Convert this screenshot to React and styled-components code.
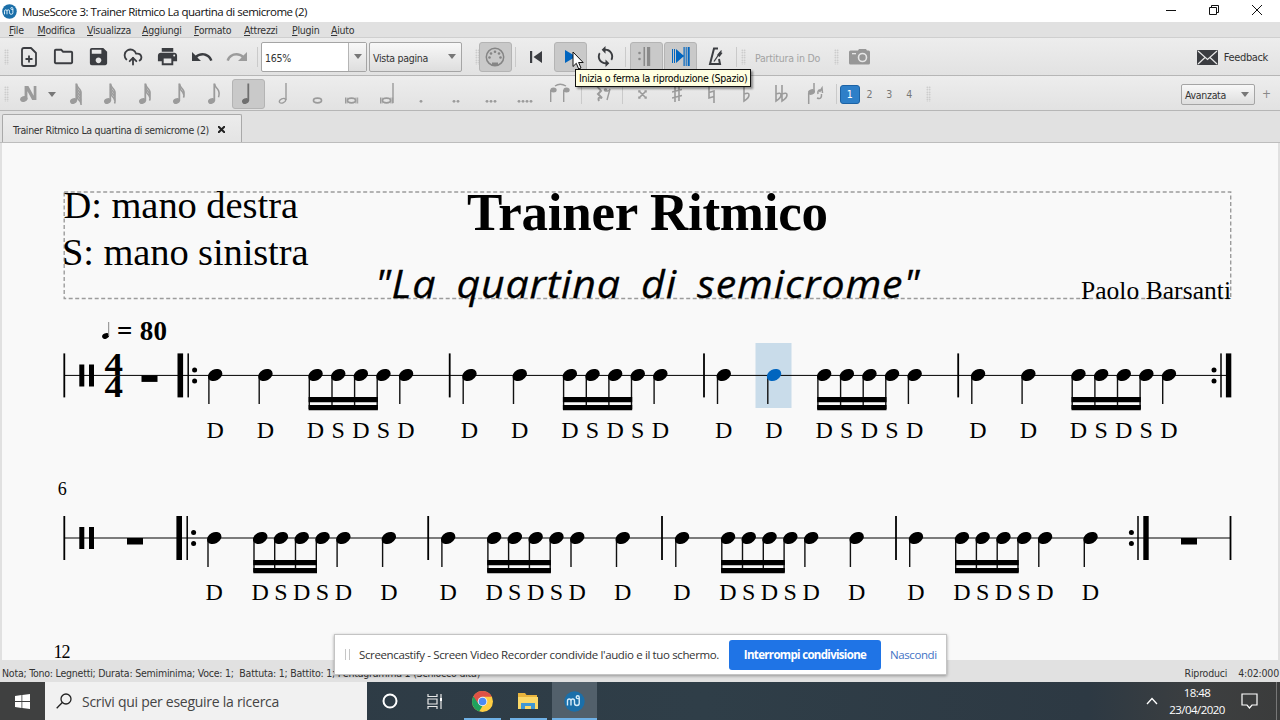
import React from 'react';
import styled, { createGlobalStyle } from 'styled-components';
import { MdSave, MdPrint, MdUndo, MdRedo, MdLoop, MdOutlineFolder } from 'react-icons/md';
import { CloudUpload } from 'lucide-react';

// --- Palette ---
const colors = {
  chrome: '#e1e1e1',
  toolbarTop: '#ededed',
  toolbarBottom: '#e2e2e2',
  line: '#b6b6b6',
  icon: '#3b3d41',
  disabled: '#9b9b9b',
  accent: '#0065bf',
  page: '#f9f9f9',
  text: '#333333',
};

const uiFont = '"DejaVu Sans Condensed", "DejaVu Sans", sans-serif';
const winFont = '"Open Sans", "Noto Sans", sans-serif';
const serif = '"Liberation Serif", serif';

const GlobalStyle = createGlobalStyle`
  * { box-sizing: border-box; }
  body { margin: 0; overflow: hidden; background: ${colors.chrome}; }
  svg { display: block; flex: none; }
`;

// --- Layout ---
const Screen = styled.div`
  position: relative;
  width: 1280px;
  height: 720px;
  display: flex;
  flex-direction: column;
  background: ${colors.chrome};
  font-family: ${uiFont};
  color: ${colors.text};
  white-space: nowrap;
`;

const TitleBar = styled.header`
  height: 22px;
  display: flex;
  align-items: center;
  padding-left: 2px;
  background: #fff;
  font: 11.5px ${winFont};
  letter-spacing: -0.48px;
  color: #111;
`;

const TitleText = styled.span`
  margin-left: 5px;
  flex: 1;
`;

const WindowButtons = styled.div`
  display: flex;
  align-items: center;
  gap: 33px;
  padding: 0 18px 3px 0;
`;

const MenuBar = styled.nav`
  height: 16px;
  display: flex;
  align-items: center;
  padding: 1px 0 0 9px;
  font-size: 10.5px;
  letter-spacing: -0.25px;
  border-bottom: 1px solid #cfcfcf;
`;

const MenuItem = styled.span`
  width: ${({ $w }) => $w}px;

  &::first-letter {
    text-decoration: underline;
  }
`;

const Toolbar = styled.div`
  height: ${({ $h }) => $h}px;
  display: flex;
  align-items: center;
  padding: ${({ $pt }) => $pt || 0}px 0 0 4px;
  background: linear-gradient(${colors.toolbarTop}, ${colors.toolbarBottom});
  border-bottom: 1px solid ${colors.line};
  font-size: 10.5px;
  letter-spacing: -0.2px;
`;

const Handle = styled.div`
  width: 5px;
  height: 16px;
  margin: 0 ${({ $gap }) => $gap || 0}px 0 ${({ $before }) => $before || 0}px;
  background-image: radial-gradient(circle, #bdbdbd 0.7px, transparent 0.9px);
  background-size: 2.5px 2.5px;
`;

const Separator = styled.div`
  width: 1px;
  height: 20px;
  margin: 0 ${({ $m }) => $m || '3px'};
  background: #cacaca;
`;

const Group = styled.div`
  display: flex;
  align-items: center;
  gap: 1.6px;
`;

const ToolButton = styled.button`
  width: ${({ $w }) => $w || 33}px;
  height: 30px;
  padding: 0;
  display: flex;
  align-items: center;
  justify-content: center;
  border: 1px solid ${({ $on }) => ($on ? '#b4b4b4' : 'transparent')};
  border-radius: 3px;
  background: ${({ $on }) => ($on ? '#c9c9c9' : 'transparent')};
  color: ${({ $off }) => ($off ? colors.disabled : colors.icon)};
`;

const Combo = styled.div`
  width: ${({ $w }) => $w}px;
  height: ${({ $h }) => $h || 30}px;
  display: flex;
  align-items: center;
  justify-content: space-between;
  margin-right: ${({ $mr }) => $mr || 0}px;
  padding-left: 3px;
  border: 1px solid #a5a5a5;
  border-radius: 2px;
  background: ${({ $edit }) => ($edit ? '#fff' : 'linear-gradient(#f8f8f8, #dedede)')};
`;

const Arrow = styled.span`
  width: 18px;
  height: 100%;
  display: flex;
  align-items: center;
  justify-content: center;
  border-left: ${({ $split }) => ($split ? '1px solid #b5b5b5' : 'none')};
  background: ${({ $split }) => ($split ? 'linear-gradient(#f8f8f8, #dedede)' : 'none')};

  &::after {
    content: '';
    border: 4px solid transparent;
    border-top: 5px solid #777;
    border-bottom: 0;
  }
`;

const ComboText = styled.span`
  padding-top: 2px;
  letter-spacing: ${({ $ls }) => $ls || '-0.3px'};
`;

const MutedLabel = styled.span`
  width: 79px;
  padding-top: 2px;
  color: #a3a3a3;
`;

const Feedback = styled.div`
  display: flex;
  align-items: center;
  gap: 6px;
  margin-left: auto;
  padding: 1px 12px 0 0;
  font-size: 11px;
  letter-spacing: -0.35px;
`;

const Voice = styled.span`
  width: 19.8px;
  height: 19px;
  display: flex;
  align-items: center;
  justify-content: center;
  border-radius: 3px;
  border: 1px solid ${({ $on }) => ($on ? '#1c62a4' : 'transparent')};
  background: ${({ $on }) => ($on ? '#2e7fc8' : 'transparent')};
  color: ${({ $on }) => ($on ? '#fff' : '#777')};
`;

const Plus = styled.span`
  width: 23px;
  text-align: center;
  font-size: 12px;
  color: #888;
`;

const TabBar = styled.div`
  height: 32px;
  display: flex;
  align-items: flex-end;
  padding-left: 2px;
  border-bottom: 1px solid #bdbdbd;
`;

const Tab = styled.div`
  width: 240px;
  height: 28px;
  display: flex;
  align-items: center;
  gap: 9px;
  padding: 2px 0 0 10px;
  border: 1px solid #a9a9a9;
  border-bottom: 0;
  border-radius: 2px 2px 0 0;
  background: linear-gradient(#ececec, #e4e4e4);
  font-size: 10.5px;
  letter-spacing: -0.34px;
`;

const ScoreView = styled.main`
  height: 517px;
  padding: 0 2px;

  & > svg {
    background: ${colors.page};
  }
`;

const StatusBar = styled.footer`
  height: 22px;
  display: flex;
  align-items: center;
  gap: 11px;
  padding: 3px 1px 0 2px;
  font-size: 10.5px;
  letter-spacing: -0.2px;
`;

const StatusText = styled.span`
  flex: 1;
  white-space: pre;
  letter-spacing: -0.22px;
`;

const Taskbar = styled.div`
  height: 38px;
  display: flex;
  background: linear-gradient(90deg, #2d3943 0, #2f3e48 55%, #2d3943 85%, #3d3f40 94%, #3b3c3c 100%);
  font-family: ${winFont};
  color: #fff;
`;

const StartButton = styled.div`
  width: 45px;
  display: flex;
  align-items: center;
  justify-content: center;
  background: #3f4040;
`;

const Search = styled.div`
  width: 322px;
  display: flex;
  align-items: center;
  gap: 10px;
  padding-left: 11px;
  background: #f1f1f1;
  color: #444;
  font-size: 14px;
  letter-spacing: -0.27px;
`;

const TaskItem = styled.div`
  width: ${({ $w }) => $w || 45}px;
  display: flex;
  align-items: center;
  justify-content: center;
  background: ${({ $active }) => ($active ? '#52606b' : 'transparent')};
  box-shadow: ${({ $open }) => ($open ? 'inset 0 -2px #6fb1e6' : 'none')};
  margin: 0 ${({ $mx }) => $mx || 0}px;
`;

const Tray = styled.div`
  margin-left: auto;
  display: flex;
  align-items: center;
  padding-right: 3px;
`;

const Clock = styled.div`
  width: 72px;
  margin-left: 3px;
  text-align: center;
  font-size: 11.5px;
  line-height: 17px;
  letter-spacing: -0.55px;
`;

const ActionCenter = styled.svg`
  margin-left: 8px;
`;

const TrayEnd = styled.div`
  width: 1px;
  height: 38px;
  margin-left: 18px;
  background: #777;
`;

// --- Things floating over the window ---
const Tooltip = styled.div`
  position: absolute;
  left: 575px;
  top: 69px;
  width: 176px;
  height: 18px;
  padding-left: 3px;
  line-height: 16px;
  border: 1px solid #111;
  background: #ffffe1;
  box-shadow: 2px 2px 2px rgba(0, 0, 0, 0.4);
  font-size: 10.5px;
  letter-spacing: -0.28px;
  color: #000;
`;

const Pointer = styled.svg`
  position: absolute;
  left: 572px;
  top: 51px;
`;

const ShareBanner = styled.div`
  position: absolute;
  left: 334px;
  top: 634px;
  width: 613px;
  height: 41px;
  display: flex;
  align-items: center;
  padding-left: 10px;
  border: 1px solid #c4c4c4;
  background: #fff;
  box-shadow: 0 1px 3px rgba(0, 0, 0, 0.35);
  font: 11.5px ${winFont};
`;

const Grip = styled.span`
  width: 5px;
  height: 11px;
  margin-right: 9px;
  border: solid #c6c6c6;
  border-width: 0 1.5px;
`;

const ShareText = styled.span`
  width: 370px;
  letter-spacing: -0.37px;
`;

const StopButton = styled.button`
  width: 152px;
  height: 30px;
  padding: 0;
  border: 0;
  border-radius: 3px;
  background: #1f74e6;
  color: #fff;
  font: 700 11.5px ${winFont};
  letter-spacing: -0.68px;
`;

const HideLink = styled.span`
  margin-left: 9px;
  letter-spacing: -0.4px;
  color: #4373c4;
`;

// --- Toolbar icons ---
const MuseLogo = ({ size }) => (
  <svg width={size} height={size} viewBox="0 0 24 24">
    <circle cx="12" cy="12" r="11.6" fill="#1b6fa9" />
    <path
      d="M4 16.500v-5q0-2.300 2-2.300t2 2.300v5M8 11.500q0-2.300 2-2.300t2 2.300v2.500q0 2.500 2.700 2.500t2.700-2.500V7.500q0-2-1.700-2t-1.700 1.600q0 1.600 1.700 1.600h2"
      fill="none" stroke="#d7ecf8" strokeWidth="1.6"
    />
  </svg>
);

const NewFileIcon = () => (
  <svg width="18" height="20" viewBox="0 0 18 20" fill="none" stroke={colors.icon} strokeWidth="1.8">
    <path d="M2 3q0-2 2-2h7l5 5v11q0 2-2 2H4q-2 0-2-2z" strokeLinejoin="round" />
    <path d="M9 8.500v7M5.500 12h7" />
  </svg>
);

const MidiIcon = () => (
  <svg width="20" height="20" viewBox="0 0 20 20">
    <circle cx="10" cy="10" r="8.700" fill="none" stroke="#858585" strokeWidth="1.500" />
    {[[4.5, 10.5], [6, 6.5], [10, 4.7], [14, 6.5], [15.5, 10.5]].map(([x, y]) => (
      <circle key={x} cx={x} cy={y} r="1.300" fill="#858585" />
    ))}
    <path d="M7 18.500v-3h6v3z" fill="#858585" />
  </svg>
);

const RewindIcon = () => (
  <svg width="12" height="12" viewBox="0 0 12 12" fill={colors.icon}>
    <path d="M0 0h2.200v12H0zM12 0v12L3.500 6z" />
  </svg>
);

const PlayIcon = () => (
  <svg width="11" height="13" viewBox="0 0 11 13" fill={colors.accent}>
    <path d="M0 0l11 6.500L0 13z" />
  </svg>
);

const RepeatIcon = () => (
  <svg width="16" height="19" viewBox="0 0 16 19" fill="#8a8a8a">
    <circle cx="1.500" cy="6" r="1.300" />
    <circle cx="1.500" cy="12" r="1.300" />
    <path d="M5.500 0h1.500v19H5.500zM9 0h3.200v19h-3.200z" />
  </svg>
);

const PanIcon = () => (
  <svg width="18" height="19" viewBox="0 0 18 19" fill={colors.accent}>
    <path d="M0 2h1v14H0zM2 2h1v14H2zM4 2l8 7-8 7zM11.500 0h1.200v19h-1.200zM13.700 0h1v19h-1zM15.700 0h2v19h-2z" />
  </svg>
);

const MetronomeIcon = () => (
  <svg width="16" height="19" viewBox="0 0 16 19" fill="none" stroke={colors.icon}>
    <path d="M11 1.500H7L3 17h10l-1-5" strokeWidth="2" />
    <path d="M7 14.500L14.500 3.500" strokeWidth="1.300" />
    <path d="M10 8l3-3.500 2.500 1.500-3 4z" fill={colors.icon} stroke="none" />
  </svg>
);

const CameraIcon = () => (
  <svg width="21" height="16" viewBox="0 0 21 16">
    <path d="M1.500 1.500H9l1-1.500h7l1 1.500h1.500q1.500 0 1.500 1.500V14q0 1.500-1.500 1.500h-18Q0 15.500 0 14V3q0-1.500 1.500-1.500z" fill="#979797" />
    <path d="M3 4h4v1.300H3z" fill="#e6e6e6" />
    <circle cx="13.500" cy="8.500" r="4" fill="none" stroke="#e6e6e6" strokeWidth="1.600" />
  </svg>
);

const EnvelopeIcon = () => (
  <svg width="21" height="15" viewBox="0 0 21 15" fill="none">
    <rect width="21" height="15" rx="1" fill={colors.icon} />
    <path d="M1 1l9.500 8.500L20 1M1 14l7-6.500M20 14l-7-6.500" stroke="#e8e8e8" strokeWidth="1.200" />
  </svg>
);

const NoteInputIcon = () => (
  <svg width="18" height="18" viewBox="0 0 18 18" fill={colors.disabled}>
    <ellipse cx="3.800" cy="14" rx="3.800" ry="2.800" transform="rotate(-20 3.800 14)" />
    <path d="M4.600 1h2.800v13.500H4.600zM4.600 1h3.800l7.600 14h-3.800zM13.700 1h2.700v14h-2.700z" />
  </svg>
);

// filled note with any number of flags; the quarter has none
const NoteIcon = ({ flags = 0, color = colors.disabled }) => (
  <svg width="16" height="22" viewBox="0 0 16 22">
    <ellipse cx="5.500" cy="18" rx="3.600" ry="2.700" transform="rotate(-25 5.500 18)" fill={color} />
    <path d="M8.300 0.500V18" stroke={color} strokeWidth="1.800" />
    {Array.from({ length: flags }, (_, i) => (
      <path
        key={i}
        d={`M8.500 ${i * 2.900 + 0.800}q.500 3 3.200 5.500q2.300 3 .800 ${flags > 1 ? 5.5 : 8}`}
        fill="none" stroke={color} strokeWidth="1.500"
      />
    ))}
  </svg>
);

const HalfIcon = () => (
  <svg width="10" height="22" viewBox="0 0 10 22" fill="none" stroke={colors.disabled}>
    <ellipse cx="4.500" cy="17.800" rx="3.300" ry="2" transform="rotate(-25 4.500 17.800)" strokeWidth="1.400" />
    <path d="M8 0v17" strokeWidth="1.400" />
  </svg>
);

const WholeIcon = ({ bars, tail }) => (
  <svg width="16" height="22" viewBox="0 0 16 22" fill="none" stroke={colors.disabled}>
    <ellipse cx="7.500" cy="17.500" rx="4" ry="2.300" strokeWidth="1.700" />
    {bars && <path d="M1.500 14.500v6M3 14.500v6M12 14.500v6M13.700 14.500v6" strokeWidth="1" />}
    {tail && <path d="M14 0v20" strokeWidth="1.400" />}
  </svg>
);

const DotsIcon = ({ count }) => (
  <svg width={count * 4} height="22" viewBox={`0 0 ${count * 4} 22`} fill={colors.disabled}>
    {Array.from({ length: count }, (_, i) => <circle key={i} cx={i * 4 + 2} cy="18.300" r="1.400" />)}
  </svg>
);

const TieIcon = () => (
  <svg width="22" height="22" viewBox="0 0 22 22" fill={colors.disabled}>
    <ellipse cx="4.500" cy="7" rx="3.200" ry="2.500" />
    <ellipse cx="17.500" cy="7" rx="3.200" ry="2.500" />
    <path d="M1.700 7v12M14.700 7v12M6 3q5-3.500 11 0" fill="none" stroke={colors.disabled} strokeWidth="1.400" />
  </svg>
);

const RestIcon = () => (
  <svg width="18" height="20" viewBox="0 0 18 20" fill="none" stroke={colors.disabled}>
    <path d="M3 2l4 5-3 3 4 4q-5-1.500-3 3" strokeWidth="2" />
    <path d="M11 6q3 2.500 5-1l-3 11" strokeWidth="1.400" />
    <circle cx="11.500" cy="6" r="1.800" fill={colors.disabled} stroke="none" />
  </svg>
);

const accidentals = {
  doubleSharp: 'M1 7l7 7M8 7l-7 7M1 8.500V7h1.500M8 8.500V7H6.500M1 12.500V14h1.500M8 12.500V14H6.500',
  sharp: 'M3 3v15M7 2v15M0 8l10-2.500M0 14l10-2.500',
  natural: 'M2 1v13l5-1.500M7 19V7L2 8.500',
  flat: 'M2 1v16q5-3 5-6t-5-1',
  doubleFlat: 'M1 1v16q5-3 5-6t-5-1M7 1v16q5-3 5-6t-5-1',
};

const AccidentalIcon = ({ kind }) => (
  <svg width={kind === 'doubleFlat' ? 13 : 10} height="20" fill="none" stroke={colors.disabled} strokeWidth="1.600">
    <path d={accidentals[kind]} />
  </svg>
);

const FlipIcon = () => (
  <svg width="17" height="22" viewBox="0 0 17 22" fill={colors.disabled}>
    <ellipse cx="4.500" cy="9" rx="3.500" ry="2.700" transform="rotate(-20 4.500 9)" />
    <path d="M1.700 10v11M7 0v9M10 15q5 2 4.500-4M15 7q-5-1-4 4M12.500 9l2.500-4 .500 5" fill="none" stroke={colors.disabled} strokeWidth="1.500" />
  </svg>
);

// --- Score ---
const head = 6.2; // distance from the head's centre to its stem

const Note = ({ x, y, lit, stem = 29 }) => (
  <g>
    <line x1={x - head} x2={x - head} y1={y + 1} y2={y + stem} stroke="#111" strokeWidth="1.400" />
    <ellipse cx={x} cy={y} rx="7.600" ry="5.600" transform={`rotate(-27 ${x} ${y})`} fill={lit ? colors.accent : '#000'} />
  </g>
);

const Beam = ({ from, to, y }) => (
  <path d={`M${from - head - 0.7} ${y + 22}H${to - head + 0.7}v5.200H${from - head - 0.7}zM${from - head - 0.7} ${y + 30}H${to - head + 0.7}v5.200H${from - head - 0.7}z`} />
);

const Measure = ({ xs, beamAt, y, lit, lyricY }) => (
  <g>
    {xs.map((x, i) => (
      <Note key={x} x={x} y={y} lit={i === lit} stem={i >= beamAt && i < beamAt + 4 ? 34 : 29} />
    ))}
    <Beam from={xs[beamAt]} to={xs[beamAt + 3]} y={y} />
    {xs.map((x, i) => (
      <text key={x} x={x} y={lyricY} fontSize="24" textAnchor="middle">
        {i >= beamAt && (i - beamAt) % 2 === 1 && i < beamAt + 4 ? 'S' : 'D'}
      </text>
    ))}
  </g>
);

const Barline = ({ x, y, w = 1.8 }) => <rect x={x - w / 2} y={y - 22} width={w} height="44" />;

const RepeatDots = ({ x, y }) => (
  <g>
    <circle cx={x} cy={y - 5.5} r="2.500" />
    <circle cx={x} cy={y + 5.5} r="2.500" />
  </g>
);

const Clef = ({ y }) => <path d={`M79.300 ${y - 11}h5v22h-5zM89 ${y - 11}h5v22h-5z`} />;
const Rest = ({ x, y }) => <rect x={x} y={y} width="16" height="6.500" />;

// one digit of the time signature, resting on y
const MeterDigit = ({ y }) => (
  <text x="104.500" y={y} fontSize="32.500" fontWeight="700" textLength="18.500" lengthAdjust="spacingAndGlyphs">4</text>
);

const firstRow = [215.1, 265.4, 315.5, 338.2, 360.8, 383.4, 406];
const secondRow = [214.2, 260.2, 280.9, 301.7, 322.5, 343.3, 388.8];

const Score = () => (
  <svg width="1276" height="517" viewBox="2 143 1276 517" fontFamily={serif} fill="#000">
    <rect x="755.500" y="343" width="36" height="65" fill="#c9dcea" />
    <rect x="64.200" y="192" width="1166.500" height="106.500" fill="none" stroke="#9c9c9c" strokeWidth="1.400" strokeDasharray="4 2.500" />

    <text x="63.500" y="218" fontSize="38.500" textLength="234.500">D: mano destra</text>
    <text x="62" y="265" fontSize="38.500" textLength="246.500">S: mano sinistra</text>
    <text x="467" y="230.300" fontSize="53" fontWeight="700" textLength="361">Trainer Ritmico</text>
    <text x="375" y="298" fontSize="38" fontFamily={winFont} fontStyle="italic" wordSpacing="8" letterSpacing="0.800" textLength="545" lengthAdjust="spacingAndGlyphs" stroke="#000" strokeWidth="0.300">"La quartina di semicrome"</text>
    <text x="1081" y="299" fontSize="25.500" textLength="150">Paolo Barsanti</text>

    {/* tempo */}
    <ellipse cx="105.600" cy="336" rx="3.600" ry="2.600" transform="rotate(-24 105.600 336)" />
    <line x1="108.700" x2="108.700" y1="322" y2="336" stroke="#888" strokeWidth="1" />
    <text x="117" y="339.500" fontSize="27" fontWeight="700" textLength="50">= 80</text>

    {/* first system */}
    <rect x="64" y="374.900" width="1166" height="1" />
    <Barline x={64.3} y={375.4} />
    <Clef y={375.4} />
    <MeterDigit y={375} />
    <MeterDigit y={397} />
    <Rest x={141.5} y={375.4} />
    <Barline x={180.3} y={375.4} w={5.6} />
    <Barline x={188.2} y={375.4} w={1.5} />
    <RepeatDots x={194.6} y={375.4} />
    {[0, 1, 2, 3].map((m) => (
      <Measure key={m} xs={firstRow.map((x) => x + m * 254.3)} beamAt={2} y={375} lyricY={438} lit={m === 2 ? 1 : -1} />
    ))}
    {[449.7, 704, 958.2].map((x) => <Barline key={x} x={x} y={375.4} />)}
    <RepeatDots x={1214} y={375.4} />
    <Barline x={1221} y={375.4} w={1.5} />
    <Barline x={1228.6} y={375.4} w={5.4} />

    {/* second system */}
    <text x="57.700" y="495" fontSize="18">6</text>
    <rect x="64" y="537.500" width="1166" height="1" />
    <Barline x={64.3} y={538} />
    <Clef y={538} />
    <Rest x={127} y={538} />
    <Barline x={179.2} y={538} w={5.6} />
    <Barline x={187.2} y={538} w={1.5} />
    <RepeatDots x={193.6} y={538} />
    {[0, 1, 2, 3].map((m) => (
      <Measure key={m} xs={secondRow.map((x) => x + m * 233.9)} beamAt={1} y={538} lyricY={600} />
    ))}
    {[428.2, 662, 896].map((x) => <Barline key={x} x={x} y={538} />)}
    <RepeatDots x={1131.4} y={538} />
    <Barline x={1138} y={538} w={1.5} />
    <Barline x={1146} y={538} w={5.4} />
    <Rest x={1181} y={538} />
    <Barline x={1230.500} y={538} />

    <text x="53.500" y="657.500" fontSize="18" textLength="17">12</text>
  </svg>
);

// --- Taskbar icons ---
const WindowsIcon = () => (
  <svg width="15" height="15" viewBox="0 0 15 15" fill="#fff">
    <path d="M0 2l6.500-.9v6H0zM7.300 1L15 0v7.100H7.300zM0 7.900h6.500v6L0 13zM7.300 7.900H15V15l-7.700-1z" />
  </svg>
);

const SearchIcon = () => (
  <svg width="16" height="16" viewBox="0 0 16 16" fill="none" stroke="#222" strokeWidth="1.300">
    <circle cx="10" cy="6" r="5" />
    <path d="M6.300 9.500L.700 15.300" />
  </svg>
);

const TaskViewIcon = () => (
  <svg width="16" height="15" viewBox="0 0 16 15" fill="none" stroke="#e8e8e8" strokeWidth="1.200">
    <path d="M1 0v2.500h9V0M1 5h9v5H1zM1 15v-2.500h9V15M14 0v15" />
    <path d="M13 4h2v3h-2z" fill="#fff" stroke="none" />
  </svg>
);

const ChromeIcon = () => (
  <svg width="21" height="21" viewBox="0 0 22 22">
    <circle cx="11" cy="11" r="11" fill="#ffce43" />
    <path d="M11 11L1.500 5.500a11 11 0 0 0 6 15.900L11.500 15z" fill="#1fa15d" />
    <path d="M11 11V6h9.800A11 11 0 0 0 1.500 5.500L6.500 13z" fill="#de5246" />
    <circle cx="11" cy="11" r="5" fill="#f1f1f1" />
    <circle cx="11" cy="11" r="4" fill="#4c8bf5" />
  </svg>
);

const ExplorerIcon = () => (
  <svg width="20" height="18" viewBox="0 0 20 18">
    <path d="M0 1h7l1.500 2H19v14H0z" fill="#e8b43d" />
    <path d="M0 5h20v12H0z" fill="#fbd867" />
    <path d="M3 17v-6h14v6h-4v-3H7v3z" fill="#3f97d3" />
  </svg>
);

const flagCounts = [5, 4, 3, 2, 1];

const App = () => (
  <>
    <GlobalStyle />
    <Screen>
      <TitleBar>
        <MuseLogo size={15} />
        <TitleText>MuseScore 3: Trainer Ritmico La quartina di semicrome (2)</TitleText>
        <WindowButtons>
          <svg width="10" height="10" stroke="#111"><path d="M0 5.500h10" /></svg>
          <svg width="10" height="10" fill="none" stroke="#111"><path d="M.5 2.500h7v7h-7zM2.500 2.500v-2h7v7h-2" /></svg>
          <svg width="10" height="10" stroke="#111"><path d="M0 0l10 10M10 0L0 10" /></svg>
        </WindowButtons>
      </TitleBar>

      <MenuBar>
        <MenuItem $w={28.500}>File</MenuItem>
        <MenuItem $w={49.500}>Modifica</MenuItem>
        <MenuItem $w={55}>Visualizza</MenuItem>
        <MenuItem $w={52}>Aggiungi</MenuItem>
        <MenuItem $w={50}>Formato</MenuItem>
        <MenuItem $w={48}>Attrezzi</MenuItem>
        <MenuItem $w={39}>Plugin</MenuItem>
        <MenuItem $w={30}>Aiuto</MenuItem>
      </MenuBar>

      <Toolbar $h={38}>
        <Handle $gap={3.5} />
        <Group>
          <ToolButton><NewFileIcon /></ToolButton>
          <ToolButton><MdOutlineFolder size={23} /></ToolButton>
          <ToolButton><MdSave size={23} /></ToolButton>
          <ToolButton><CloudUpload size={20} strokeWidth={2.2} /></ToolButton>
          <ToolButton><MdPrint size={23} /></ToolButton>
          <ToolButton><MdUndo size={24} /></ToolButton>
          <ToolButton $off><MdRedo size={24} /></ToolButton>
        </Group>
        <Separator $m="3px 0 4px" />
        <Combo $w={106} $mr={2} $edit><ComboText>165%</ComboText><Arrow $split /></Combo>
        <Combo $w={93} $mr={13}><ComboText $ls="-0.3px">Vista pagina</ComboText><Arrow /></Combo>
        <Handle $gap={-1.5} />
        <ToolButton $on><MidiIcon /></ToolButton>
        <Separator $m="3.5px" />
        <Group>
          <ToolButton><RewindIcon /></ToolButton>
          <ToolButton $on><PlayIcon /></ToolButton>
          <ToolButton><MdLoop size={23} /></ToolButton>
        </Group>
        <Separator $m="3.5px" />
        <Group>
          <ToolButton $on><RepeatIcon /></ToolButton>
          <ToolButton $on><PanIcon /></ToolButton>
          <ToolButton><MetronomeIcon /></ToolButton>
        </Group>
        <Separator $m="4px" />
        <Handle $gap={9} />
        <MutedLabel>Partitura in Do</MutedLabel>
        <Handle $gap={4} />
        <ToolButton><CameraIcon /></ToolButton>
        <Feedback><EnvelopeIcon />Feedback</Feedback>
      </Toolbar>

      <Toolbar $h={35} $pt={2}>
        <Handle $gap={3.5} />
        <ToolButton><NoteInputIcon /></ToolButton>
        <ToolButton $w={13.5}><Arrow /></ToolButton>
        <Group>
          {flagCounts.map((flags) => <ToolButton key={flags}><NoteIcon flags={flags} /></ToolButton>)}
          <ToolButton $on><NoteIcon color="#6f6f6f" /></ToolButton>
          <ToolButton><HalfIcon /></ToolButton>
          <ToolButton><WholeIcon /></ToolButton>
          <ToolButton><WholeIcon bars /></ToolButton>
          <ToolButton><WholeIcon bars tail /></ToolButton>
          {[1, 2, 3, 4].map((n) => <ToolButton key={n}><DotsIcon count={n} /></ToolButton>)}
          <ToolButton><TieIcon /></ToolButton>
        </Group>
        <Separator $m="4px 0 5px" />
        <ToolButton><RestIcon /></ToolButton>
        <Separator />
        <Group>
          {Object.keys(accidentals).map((kind) => (
            <ToolButton key={kind}><AccidentalIcon kind={kind} /></ToolButton>
          ))}
          <ToolButton><FlipIcon /></ToolButton>
        </Group>
        <Separator $m="3px 0 3.5px" />
        {[1, 2, 3, 4].map((n) => <Voice key={n} $on={n === 1}>{n}</Voice>)}
        <Handle $before={7} $gap={250} />
        <Combo $w={74} $h={21}><ComboText>Avanzata</ComboText><Arrow /></Combo>
        <Plus>+</Plus>
      </Toolbar>

      <TabBar>
        <Tab>
          Trainer Ritmico La quartina di semicrome (2)
          <svg width="7" height="7" stroke="#222" strokeWidth="2"><path d="M0 0l7 7M7 0L0 7" /></svg>
        </Tab>
      </TabBar>

      <ScoreView>
        <Score />
      </ScoreView>

      <StatusBar>
        <StatusText>Nota; Tono: Legnetti; Durata: Semiminima; Voce: 1;  Battuta: 1; Battito: 1; Pentagramma 1 (Schiocco dita)</StatusText>
        <span>Riproduci</span>
        <span>4:02:000</span>
      </StatusBar>

      <Taskbar>
        <StartButton><WindowsIcon /></StartButton>
        <Search><SearchIcon />Scrivi qui per eseguire la ricerca</Search>
        <TaskItem>
          <svg width="16" height="16" fill="none" stroke="#fff" strokeWidth="2"><circle cx="8" cy="8" r="6.500" /></svg>
        </TaskItem>
        <TaskItem><TaskViewIcon /></TaskItem>
        <TaskItem $w={37} $mx={6.5} $open><ChromeIcon /></TaskItem>
        <TaskItem $w={37} $mx={2.5} $open><ExplorerIcon /></TaskItem>
        <TaskItem $mx={2.5} $active $open><MuseLogo size={21} /></TaskItem>
        <Tray>
          <svg width="12" height="8" fill="none" stroke="#fff" strokeWidth="1.300"><path d="M1 7l5-5.500L11 7" /></svg>
          <Clock>18:48<br />23/04/2020</Clock>
          <ActionCenter width="17" height="16" fill="none" stroke="#fff" strokeWidth="1.200">
            <path d="M1 1h15v11h-5l-2.500 3L6 12H1z" />
          </ActionCenter>
          <TrayEnd />
        </Tray>
      </Taskbar>

      <ShareBanner>
        <Grip />
        <ShareText>Screencastify - Screen Video Recorder condivide l'audio e il tuo schermo.</ShareText>
        <StopButton>Interrompi condivisione</StopButton>
        <HideLink>Nascondi</HideLink>
      </ShareBanner>

      <Tooltip>Inizia o ferma la riproduzione (Spazio)</Tooltip>
      <Pointer width="14" height="20" viewBox="0 0 14 20">
        <path d="M1 1v14.500l3.300-3.200 2.400 5.700 2.300-1-2.400-5.500h4.600z" fill="#fff" stroke="#111" />
      </Pointer>
    </Screen>
  </>
);

export default App;
